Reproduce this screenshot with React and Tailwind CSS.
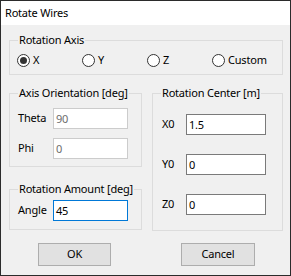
import React from "react";

const font = { fontFamily: '"Noto Sans", "Segoe UI", sans-serif' };

function Group({ title, className, children }) {
  return (
    <div className={`relative border border-[#dcdcdc] ${className}`}>
      <span className="absolute -top-[9px] left-[8px] whitespace-nowrap bg-[#f0f0f0] px-[1px] leading-[16px] text-[#000]">
        {title}
      </span>
      {children}
    </div>
  );
}

function Radio({ label, checked }) {
  return (
    <div className="flex items-center">
      <span className="flex h-[13px] w-[13px] items-center justify-center rounded-full border border-[#333] bg-white">
        {checked && <span className="h-[7px] w-[7px] rounded-full bg-[#333]" />}
      </span>
      <span className="ml-[3px] leading-[14px]">{label}</span>
    </div>
  );
}

function Input({ value, variant }) {
  const cls =
    variant === "disabled"
      ? "border-[#cccccc] text-[#6d6d6d]"
      : variant === "focus"
      ? "border-[#0078d7] text-black"
      : "border-[#7a7a7a] text-black";
  return (
    <div className={`flex h-[21px] items-center border bg-white pl-[2px] leading-[14px] ${cls}`}>
      {value}
    </div>
  );
}

export default function App() {
  return (
    <div
      className="flex h-[276px] w-[291px] flex-col border border-[#2b2b2b] bg-[#f0f0f0] text-[11px] tracking-[-0.2px] text-black"
      style={font}
    >
      <div className="flex h-[24px] items-center bg-white pl-[4px]">Rotate Wires</div>
      <div className="flex flex-col pl-[8px] pr-[7px]">
        <Group title="Rotation Axis" className="mt-[15px] h-[35px]">
          <div className="grid grid-cols-[65px_65px_65px_auto] pl-[7px] pt-[12px]">
            <Radio label="X" checked />
            <Radio label="Y" />
            <Radio label="Z" />
            <Radio label="Custom" />
          </div>
        </Group>
        <div className="mt-[18px] grid grid-cols-[133px_131px] gap-x-[10px]">
          <div className="flex flex-col">
            <Group title="Axis Orientation [deg]" className="h-[74px]">
              <div className="grid grid-cols-[35px_75px] items-center gap-y-[9px] pl-[8px] pt-[14px]">
                <span>Theta</span>
                <Input value="90" variant="disabled" />
                <span>Phi</span>
                <Input value="0" variant="disabled" />
              </div>
            </Group>
            <Group title="Rotation Amount [deg]" className="mt-[22px] h-[41px]">
              <div className="grid grid-cols-[35px_75px] items-center pl-[8px] pt-[10px]">
                <span>Angle</span>
                <Input value="45" variant="focus" />
              </div>
            </Group>
          </div>
          <Group title="Rotation Center [m]" className="h-[138px]">
            <div className="grid grid-cols-[24px_80px] items-center gap-y-[19px] pl-[9px] pt-[20px]">
              <span>X0</span>
              <Input value="1.5" />
              <span>Y0</span>
              <Input value="0" />
              <span>Z0</span>
              <Input value="0" />
            </div>
          </Group>
        </div>
        <div className="mt-[12px] flex pl-[29px]">
          <div className="flex h-[23px] w-[73px] items-center justify-center border border-[#adadad] bg-[#e1e1e1]">
            OK
          </div>
          <div className="ml-[70px] flex h-[23px] w-[74px] items-center justify-center border border-[#adadad] bg-[#e1e1e1]">
            Cancel
          </div>
        </div>
      </div>
    </div>
  );
}
